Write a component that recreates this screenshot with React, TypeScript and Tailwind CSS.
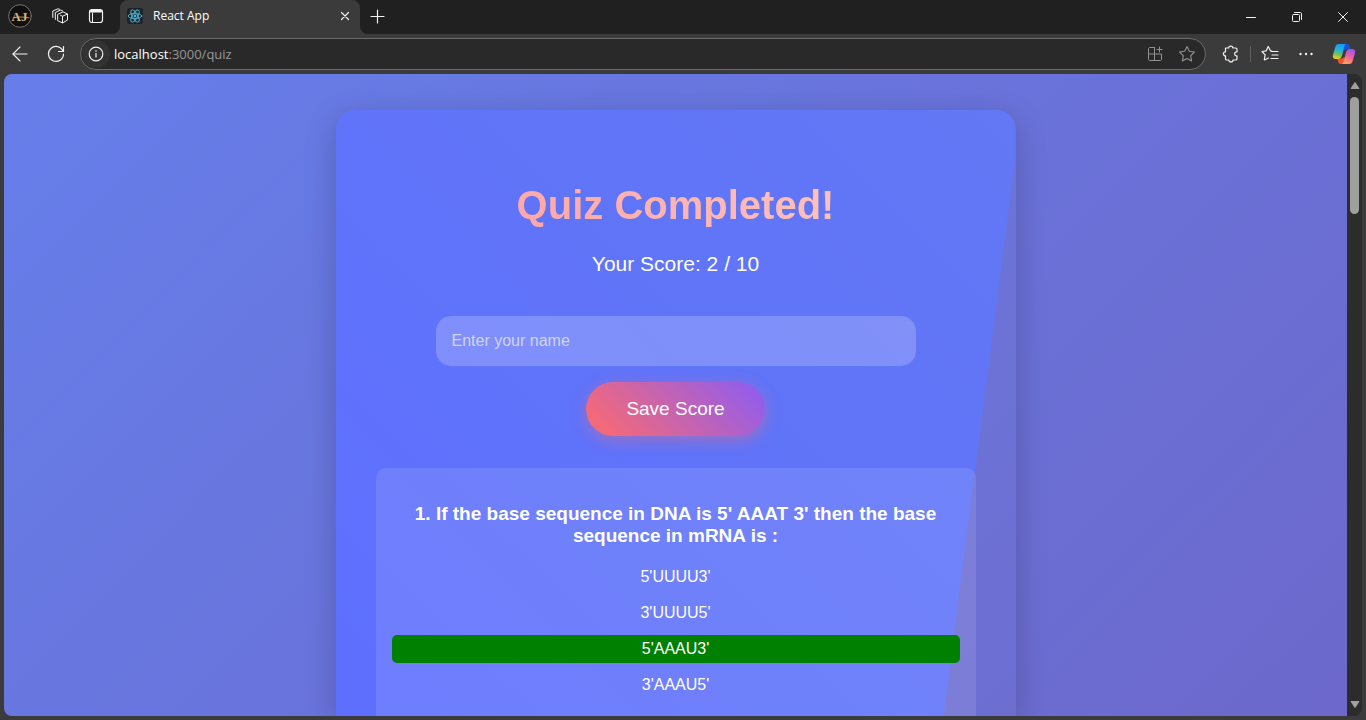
import React from "react";
import { ArrowLeft } from "lucide-react";

const iconButton = "flex items-center justify-center text-[#f2f2f2]";

const options = [
  { text: "5'UUUU3'", correct: false },
  { text: "3'UUUU5'", correct: false },
  { text: "5'AAAU3'", correct: true },
  { text: "3'AAAU5'", correct: false },
];

function Svg({ size, children, className }: { size: number; children: React.ReactNode; className?: string }) {
  return (
    <svg width={size} height={size} viewBox={`0 0 ${size} ${size}`} fill="none" stroke="currentColor" strokeLinecap="round" strokeLinejoin="round" className={className} aria-hidden="true">
      {children}
    </svg>
  );
}

function ReactLogo() {
  return (
    <Svg size={16}>
      <rect width="16" height="16" rx="2" fill="#20232a" stroke="none" />
      <g stroke="#4fb6d3" strokeWidth="0.9">
        <ellipse cx="8" cy="8" rx="6.8" ry="2.6" />
        <ellipse cx="8" cy="8" rx="6.8" ry="2.6" transform="rotate(60 8 8)" />
        <ellipse cx="8" cy="8" rx="6.8" ry="2.6" transform="rotate(120 8 8)" />
      </g>
      <circle cx="8" cy="8" r="1.4" fill="#4fb6d3" stroke="none" />
    </Svg>
  );
}

function Avatar() {
  return (
    <Svg size={24}>
      <circle cx="12" cy="12" r="11.3" fill="#11100f" stroke="#77736e" strokeWidth="1" />
      <text x="11.5" y="16.5" textAnchor="middle" fontFamily="Liberation Serif, serif" fontSize="13" fontWeight="700" fill="#d3b67c" stroke="none">AJ</text>
      <path d="M5 14C9 12.500 14 12.800 21 13.800" stroke="#cfb27a" strokeWidth="0.8" />
    </Svg>
  );
}

function Copilot() {
  return (
    <Svg size={24}>
      <defs>
        <linearGradient id="cp-left" x1="0.5" y1="0" x2="0.3" y2="1">
          <stop offset="0" stopColor="#129cf5" />
          <stop offset="0.4" stopColor="#22b2d8" />
          <stop offset="0.72" stopColor="#7cc54a" />
          <stop offset="1" stopColor="#f8cd18" />
        </linearGradient>
        <linearGradient id="cp-right" x1="0.7" y1="0" x2="0.3" y2="1">
          <stop offset="0" stopColor="#a250f5" />
          <stop offset="0.5" stopColor="#f0609b" />
          <stop offset="1" stopColor="#ffa650" />
        </linearGradient>
      </defs>
      <g stroke="none">
        <path d="M10 2h5.200c1.500 0 2.200.9 2.600 2.200l.9 3.300h-4.400L11.500 9z" fill="#1c4fd6" />
        <path d="M14 22H8.800c-1.500 0-2.200-.9-2.600-2.200l-.9-3.300h4.400l2.800-1.500z" fill="#f0562d" />
        <path d="M6.800 2h7.400c-1 .3-1.500 1.200-1.800 2.300L10 13.500c-.6 2.200-1.800 3.500-4 3.500H4C1.500 17 .3 15.300 1 12.900L3.300 5C3.900 3 4.900 2 6.800 2z" fill="url(#cp-left)" />
        <path d="M17.200 22H9.800c1-.3 1.500-1.200 1.800-2.300L14 10.500C14.600 8.300 15.800 7 18 7h2c2.500 0 3.700 1.700 3 4.100L20.700 19c-.6 2-1.600 3-3.500 3z" fill="url(#cp-right)" />
      </g>
    </Svg>
  );
}

function TabBar() {
  return (
    <header className="flex h-[34px] shrink-0 bg-[#202020]">
      <div className="flex w-[112px] items-center pb-0.5 pl-2">
        <button aria-label="Profile" className={iconButton}><Avatar /></button>
        <button aria-label="Workspaces" className={`${iconButton} ml-5`}>
          <Svg size={16}>
            <path d="M6 6.200 11 3.800l4.500 2.200v6L10.500 15 6 12.800zM15.300 6 10.500 8.300V14.500M10.500 8.300 8.500 7.200M3.300 11.500V4.500L8.500 2l2 .8M.8 9.500V3L6 .8l1.500.5" />
          </Svg>
        </button>
        <button aria-label="Tab actions" className={`${iconButton} ml-5`}>
          <Svg size={16}>
            <rect x="1.5" y="1.5" width="13" height="13" rx="2.5" strokeWidth="1.2" />
            <path d="M2.500 2.500h11v1.500h-11z" fill="currentColor" />
            <path d="M4.500 5v9" />
          </Svg>
        </button>
      </div>
      <div className="flex h-full w-2 items-end bg-[#3b3b3b]"><span className="h-full w-full rounded-br-lg bg-[#202020]" /></div>
      <div className="flex w-60 items-center rounded-t-lg bg-[#3b3b3b] px-[7px] pb-0.5 text-white">
        <ReactLogo />
        <span className="ml-2.5 flex-1 font-['Open_Sans','Noto_Sans',sans-serif] text-xs leading-4">React App</span>
        <button aria-label="Close tab" className={iconButton}>
          <Svg size={16}><path d="M4.500 4.500l7 7M11.500 4.500l-7 7" strokeWidth="1.2" /></Svg>
        </button>
      </div>
      <div className="flex flex-1 bg-[#3b3b3b]">
        <div className="flex flex-1 items-center rounded-bl-lg bg-[#202020] pl-2">
          <button aria-label="New tab" className={`${iconButton} pb-0.5`}>
            <Svg size={18}><path d="M9.500 3v13M3 9.500h13" strokeWidth="1.2" /></Svg>
          </button>
          <div className="ml-auto flex">
            <button aria-label="Minimize" className={`${iconButton} h-[34px] w-[46px]`}>
              <Svg size={12}><path d="M1.500 6.500h9" /></Svg>
            </button>
            <button aria-label="Restore" className={`${iconButton} h-[34px] w-[46px]`}>
              <Svg size={12}><rect x="1.500" y="3.500" width="7" height="7" rx="1" /><path d="M3.500 1.500h5.500c1 0 1.500.6 1.500 1.500v5.500" /></Svg>
            </button>
            <button aria-label="Close window" className={`${iconButton} h-[34px] w-[46px]`}>
              <Svg size={12}><path d="M1.500 1.500l9 9M10.500 1.500l-9 9" /></Svg>
            </button>
          </div>
        </div>
      </div>
    </header>
  );
}

function Toolbar() {
  return (
    <nav className="flex h-10 shrink-0 items-center bg-[#3b3b3b] pr-[10px] pl-2">
      <button aria-label="Back" className={`${iconButton} w-6`}><ArrowLeft size={24} strokeWidth={1.1} /></button>
      <button aria-label="Refresh" className={`${iconButton} ml-3 w-6`}>
        <Svg size={18}><path d="M16 6.200A7.500 7.500 0 1 0 16.500 9M16.500 1.500v5h-5" strokeWidth="1.2" /></Svg>
      </button>
      <div className="ml-3 flex h-8 flex-1 items-center rounded-full border border-[#6b6b6b] bg-[#292929] px-[1px]">
        <button aria-label="Site information" className={`${iconButton} size-7 rounded-full bg-[#333333]`}>
          <Svg size={16}><circle cx="8" cy="8" r="6.8" strokeWidth="1.2" /><path d="M8 7.500v3.500" strokeWidth="1.2" /><circle cx="8" cy="5" r="0.8" fill="currentColor" stroke="none" /></Svg>
        </button>
        <div className="ml-1 flex-1 font-['Open_Sans','Noto_Sans',sans-serif] text-[13px] leading-5 text-[#979797]">
          <span className="text-white">localhost</span>:3000/quiz
        </div>
        <button aria-label="Install app" className="text-[#929292]">
          <Svg size={16}><path d="M7.500 1.500H3c-1 0-1.500.5-1.500 1.500v10c0 1 .5 1.500 1.500 1.500h10c1 0 1.500-.5 1.500-1.500V8h-13M7.500 1.500v13M12.500 1v5M10 3.500h5" /></Svg>
        </button>
        <button aria-label="Add to favorites" className="mr-[8px] ml-[15px] text-[#929292]">
          <Svg size={18}><path d="M9 1.500l2.300 4.800 5.200.7-3.800 3.700.9 5.300L9 13.500 4.400 16l.9-5.300L1.500 7l5.200-.7z" strokeWidth="1.1" /></Svg>
        </button>
      </div>
      <button aria-label="Extensions" className={`${iconButton} ml-4`}>
        <Svg size={18}><path d="M3.500 3h3.200c0-2.600 4.200-2.600 4.200 0h2.800c.8 0 1.300.5 1.300 1.300v2.500c-3.200-.3-3.200 4.400 0 4.100v2.800c0 .8-.5 1.300-1.300 1.300H11c0 2.600-4.200 2.600-4.200 0H4.800c-.8 0-1.300-.5-1.300-1.300v-2.800c-2.800 0-2.800-4.100 0-4.100z" strokeWidth="1.2" /></Svg>
      </button>
      <span className="mx-[10px] h-4 w-px bg-[#606060]" />
      <button aria-label="Favorites" className={iconButton}>
        <Svg size={18}><path d="M11.300 6.300 9.500 5.800 7.200 1.500 5.200 5.800 1 6.500l3.100 3.300-.8 5.200 4.200-2M10.500 6.500H17M11 10h6M10 13.500h7" strokeWidth="1.2" /></Svg>
      </button>
      <button aria-label="Settings and more" className={`${iconButton} ml-[18px]`}>
        <Svg size={18}><g fill="currentColor" stroke="none"><circle cx="3.500" cy="9" r="1.2" /><circle cx="9" cy="9" r="1.2" /><circle cx="14.500" cy="9" r="1.2" /></g></Svg>
      </button>
      <button aria-label="Copilot" className="ml-[17px]"><Copilot /></button>
    </nav>
  );
}

function Scrollbar() {
  return (
    <div className="flex w-[15px] shrink-0 flex-col items-center bg-[#2c2c2c] py-[7px]" aria-hidden="true">
      <svg width="10" height="9" viewBox="0 0 10 9" fill="#a0a0a0"><path d="M5 .8 9.200 7c.3.600 0 1-.6 1H1.400c-.6 0-.9-.4-.6-1z" /></svg>
      <span className="mt-[7px] h-[117px] w-[9px] rounded-full bg-[#9f9f9f]" />
      <svg className="mt-auto" width="10" height="9" viewBox="0 0 10 9" fill="#a0a0a0"><path d="M5 8.200.8 2C.5 1.400.8 1 1.400 1h7.200c.6 0 .9.400.6 1z" /></svg>
    </div>
  );
}

export default function App() {
  return (
    <div className="flex h-screen flex-col overflow-hidden bg-[#3b3b3b]">
      <TabBar />
      <Toolbar />
      <div className="mr-1 mb-1 ml-1 flex min-h-0 flex-1 overflow-hidden rounded-lg">
        <main className="flex flex-1 flex-col overflow-hidden bg-[linear-gradient(135deg,#667eea_0%,#764ba2_100%)] bg-[length:100%_3325px] bg-no-repeat px-4 pt-9 font-['Liberation_Sans',Arial,sans-serif] text-white">
          <section className="relative mx-auto flex w-full max-w-[680px] flex-1 flex-col items-center rounded-t-[20px] bg-white/2 px-10 pt-[70px] text-center shadow-[0_8px_32px_rgba(0,0,0,0.2)]">
            <div className="absolute inset-0 rounded-t-[20px] bg-[linear-gradient(45deg,#5e6fff_0%,#6278f4_100%)] [clip-path:polygon(0_0,100%_0,100%_46px,calc(100%_-_216px)_1728px,0_1728px)]" />
            <h1 className="relative bg-[linear-gradient(45deg,#ffa6a6,#ffc3bc)] bg-clip-text text-[40px] leading-[50px] font-bold text-transparent">Quiz Completed!</h1>
            <p className="relative mt-[22px] text-[21px] leading-6">Your Score: 2 / 10</p>
            <form className="relative mt-10 flex w-full flex-col items-center" onSubmit={(e) => e.preventDefault()}>
              <input aria-label="Enter your name" placeholder="Enter your name" className="h-[50px] w-4/5 rounded-[15px] bg-white/20 px-4 text-base text-white outline-none placeholder:text-[#d0d4ee]" />
              <button type="submit" className="mt-4 rounded-full bg-[linear-gradient(45deg,#ff6b6b,#8b5cf6)] px-10 py-4 text-[19px] leading-[22px] shadow-[0_4px_15px_rgba(255,107,107,0.4)]">Save Score</button>
            </form>
            <article className="relative mt-8 w-full flex-1 rounded-t-[10px] bg-white/10 px-4 pt-[35px]">
              <h2 className="text-[19px] leading-[22px] font-bold">1. If the base sequence in DNA is 5' AAAT 3' then the base sequence in mRNA is :</h2>
              <ul className="mt-4 flex flex-col gap-2">
                {options.map((option) => (
                  <li key={option.text} className={option.correct ? "rounded-[5px] bg-[#008000] py-[5px] text-base leading-[18px]" : "py-[5px] text-base leading-[18px]"}>
                    {option.text}
                  </li>
                ))}
              </ul>
            </article>
          </section>
        </main>
        <Scrollbar />
      </div>
    </div>
  );
}
